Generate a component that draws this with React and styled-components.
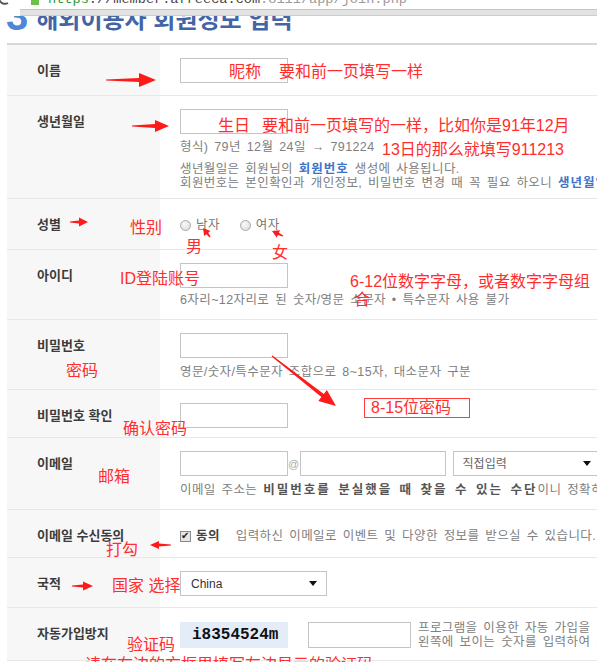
import styled, { createGlobalStyle } from 'styled-components';

const GlobalStyle = createGlobalStyle`
  * {
    box-sizing: border-box;
  }
  html, body {
    margin: 0;
    background: #fff;
  }
  body {
    font-family: "Liberation Sans", "Noto Sans CJK KR", sans-serif;
    overflow: hidden;
  }
`

const Page = styled.div`
  position: relative;
  width: 600px;
  height: 662px;
  overflow: hidden;
`

// browser chrome, cut off at the top of the shot
const Chrome = styled.div`
  position: relative;
  z-index: 2;
  display: flex;
  height: 16px;
  background: #fff;
`
const ReloadBox = styled.div`
  width: 20px;
  height: 16px;
`
const UrlBar = styled.div`
  flex: 1;
  display: flex;
  flex-direction: column;
  margin-right: 3px;
`
const UrlField = styled.div`
  display: flex;
  align-items: flex-start;
  height: 10px;
  padding-left: 11px;
  overflow: hidden;
  border-bottom: 1px solid #c6c6c6;
`
const Lock = styled.span`
  width: 8px;
  height: 5px;
  background: #6fbf4a;
  flex-shrink: 0;
`
const UrlText = styled.span`
  margin: -7px 0 0 9px;
  font-family: "Liberation Mono", monospace;
  font-size: 13.6px;
  line-height: 14px;
  white-space: nowrap;
  color: #444;
`
const Scheme = styled.span`
  color: #2e9b2e;
`
const Faint = styled.span`
  color: #9a9a9a;
`
const Band = styled.div`
  height: 6px;
  background: #e2e2e2;
  border-bottom: 1px solid #cdcdcd;
`

const Title = styled.div`
  display: flex;
  align-items: flex-end;
  height: 27px;
  padding: 0 0 11px 6px;
  overflow: hidden;
`
const StepNo = styled.span`
  font-size: 40px;
  line-height: 40px;
  font-weight: bold;
  color: #4f86d8;
  margin-bottom: -4px;
`
const TitleText = styled.span`
  margin-left: 8px;
  font-size: 24px;
  line-height: 24px;
  font-weight: bold;
  color: #4265a6;
  white-space: nowrap;
`

const Table = styled.div`
  width: 590px;
  margin-left: 7px;
  border-top: 2px solid #d8d8d8;
`
const Row = styled.div`
  display: grid;
  grid-template-columns: 153px 1fr;
  height: ${p => p.$h}px;
  border-bottom: 1px solid #e8e8e8;
`
const Label = styled.div`
  padding: 19px 0 0 30px;
  background: #f7f7f7;
  font-size: 13px;
  line-height: 14px;
  font-weight: bold;
  color: #3c3c3c;
  white-space: nowrap;
`
const Cell = styled.div`
  padding: 13px 0 0 20px;
  overflow: hidden;
  white-space: nowrap;
  font-size: 12.5px;
  line-height: 14px;
  letter-spacing: 0.4px;
  word-spacing: 2px;
  color: #808080;
`
const Line = styled.div`
  display: flex;
  align-items: center;
  margin-top: ${p => p.$mt || 0}px;
`
const Input = styled.input`
  display: block;
  width: ${p => p.$w || 108}px;
  height: ${p => p.$hh || 25}px;
  margin: 0 0 0 ${p => p.$ml || 0}px;
  border: 1px solid #c4c4c4;
  background: #fff;
  flex-shrink: 0;
`
const Help = styled.div`
  margin-top: ${p => p.$mt || 0}px;
  line-height: 14px;
`
const Blue = styled.b`
  color: #3d74c8;
  letter-spacing: 1px;
`
const Dark = styled.b`
  color: #555;
  letter-spacing: 2px;
`
const At = styled.span`
  width: 18px;
  text-align: center;
  color: #aaa;
  font-size: 11px;
`
const Select = styled.div`
  display: flex;
  align-items: center;
  justify-content: space-between;
  flex-shrink: 0;
  width: ${p => p.$w}px;
  height: 25px;
  margin-left: ${p => p.$ml || 0}px;
  padding: 0 ${p => p.$pr}px 0 ${p => p.$pl}px;
  border: 1px solid #c4c4c4;
  color: ${p => p.$c};
  font-size: 12px;
  letter-spacing: 0;
`
const Caret = styled.span`
  width: 0;
  height: 0;
  border-left: 4px solid transparent;
  border-right: 4px solid transparent;
  border-top: 5px solid #111;
`
const Radio = styled.span`
  width: 11px;
  height: 11px;
  border-radius: 50%;
  border: 1px solid #a9a9a9;
  background: radial-gradient(circle at 40% 35%, #fafafa, #d6d6d6);
  margin-left: ${p => p.$ml || 0}px;
  flex-shrink: 0;
`
const RadioText = styled.span`
  margin-left: 5px;
  color: #777;
`
const Check = styled.span`
  display: flex;
  align-items: center;
  justify-content: center;
  width: 11px;
  height: 11px;
  border: 1px solid #8a8a8a;
  background: #e6e6e6;
  color: #222;
  font-size: 10px;
  line-height: 1;
`
const Agree = styled.b`
  margin: 0 16px 0 5px;
  color: #444;
`
const Captcha = styled.div`
  display: flex;
  align-items: center;
  width: 108px;
  height: 26px;
  padding-left: 12px;
  background: #e4ecf8;
  font-family: "Liberation Mono", monospace;
  font-size: 16px;
  font-weight: bold;
  letter-spacing: 0;
  color: #111;
  flex-shrink: 0;
`
const CaptchaNote = styled.div`
  margin-left: 7px;
  line-height: 14px;
`

// red hand-drawn notes layered over the form
const Notes = styled.div`
  position: absolute;
  inset: 0;
  z-index: 3;
  pointer-events: none;
  font-family: "Liberation Sans", "Noto Sans CJK SC", sans-serif;
  color: #ff2d2d;
`
const Note = styled.span`
  position: absolute;
  left: ${p => p.$x}px;
  top: ${p => p.$y}px;
  font-size: 16px;
  line-height: 18px;
  white-space: nowrap;
`
const BoxNote = styled(Note)`
  width: 106px;
  height: 20px;
  padding-left: 6px;
  border: 1.5px solid #ff3b3b;
  line-height: 17px;
`

const arrow = (x1, y1, x2, y2, head, hw, tw) => {
  const len = Math.hypot(x2 - x1, y2 - y1);
  const ux = (x2 - x1) / len;
  const uy = (y2 - y1) / len;
  const nx = -uy;
  const ny = ux;
  const bx = x2 - ux * head;
  const by = y2 - uy * head;
  const pts = [
    [x1 + nx * 0.6, y1 + ny * 0.6],
    [bx + nx * tw, by + ny * tw],
    [bx + nx * hw, by + ny * hw],
    [x2, y2],
    [bx - nx * hw, by - ny * hw],
    [bx - nx * tw, by - ny * tw],
    [x1 - nx * 0.6, y1 - ny * 0.6],
  ];
  return pts.map(p => p[0].toFixed(1) + ',' + p[1].toFixed(1)).join(' ');
};

const arrows = [
  [106, 80, 156, 80, 17, 7, 2],
  [132, 126, 169, 126, 14, 6, 2],
  [70, 222, 88, 222, 9, 4.5, 1.5],
  [210, 237, 203, 228, 7, 4, 1.2],
  [283, 236, 272, 231, 7, 4, 1.2],
  [272, 356, 336, 406, 17, 7, 2],
  [171, 545, 150, 545, 9, 4, 1.5],
  [72, 586, 93, 586, 10, 4.5, 1.5],
];

const App = () => {
  return (
    <Page>
      <GlobalStyle />
      <Chrome>
        <ReloadBox>
          <svg width="20" height="16" viewBox="0 0 20 16">
            <path d="M-1 -2 A6 6 0 0 0 8 3" fill="none" stroke="#555" strokeWidth="2" />
          </svg>
        </ReloadBox>
        <UrlBar>
          <UrlField>
            <Lock />
            <UrlText>
              <Scheme>https</Scheme>://member.afreeca.com<Faint>:8111/app/join.php</Faint>
            </UrlText>
          </UrlField>
          <Band />
        </UrlBar>
      </Chrome>

      <Title>
        <StepNo>3</StepNo>
        <TitleText>해외이용자 회원정보 입력</TitleText>
      </Title>

      <Table>
        <Row $h={51}>
          <Label>이름</Label>
          <Cell><Input /></Cell>
        </Row>
        <Row $h={103}>
          <Label>생년월일</Label>
          <Cell>
            <Input />
            <Help $mt={6}>형식) 79년 12월 24일 → 791224</Help>
            <Help $mt={8}>생년월일은 회원님의 <Blue>회원번호</Blue> 생성에 사용됩니다.</Help>
            <Help>회원번호는 본인확인과 개인정보, 비밀번호 변경 때 꼭 필요 하오니 <Blue>생년월일을 정확히</Blue></Help>
          </Cell>
        </Row>
        <Row $h={51}>
          <Label>성별</Label>
          <Cell>
            <Line $mt={6}>
              <Radio />
              <RadioText>남자</RadioText>
              <Radio $ml={20} />
              <RadioText>여자</RadioText>
            </Line>
          </Cell>
        </Row>
        <Row $h={70}>
          <Label>아이디</Label>
          <Cell>
            <Input />
            <Help $mt={5}>6자리~12자리로 된 숫자/영문 소문자 • 특수문자 사용 불가</Help>
          </Cell>
        </Row>
        <Row $h={70}>
          <Label>비밀번호</Label>
          <Cell>
            <Input />
            <Help $mt={7}>영문/숫자/특수문자 조합으로 8~15자, 대소문자 구분</Help>
          </Cell>
        </Row>
        <Row $h={48}>
          <Label>비밀번호 확인</Label>
          <Cell><Input /></Cell>
        </Row>
        <Row $h={72}>
          <Label>이메일</Label>
          <Cell>
            <Line>
              <Input />
              <At>@</At>
              <Input $w={146} />
              <Select $w={145} $ml={7} $pl={9} $pr={6} $c="#666">
                직접입력
                <Caret />
              </Select>
            </Line>
            <Help $mt={7}>
              이메일 주소는 <Dark>비밀번호를 분실했을 때 찾을 수 있는 수단</Dark>이니 정확히 입력해 주세요.
            </Help>
          </Cell>
        </Row>
        <Row $h={48}>
          <Label>이메일 수신동의</Label>
          <Cell>
            <Line $mt={6}>
              <Check>✔</Check>
              <Agree>동의</Agree>
              입력하신 이메일로 이벤트 및 다양한 정보를 받으실 수 있습니다.
            </Line>
          </Cell>
        </Row>
        <Row $h={50}>
          <Label>국적</Label>
          <Cell>
            <Select $w={147} $pl={10} $pr={9} $c="#333">
              China
              <Caret />
            </Select>
          </Cell>
        </Row>
        <Row $h={53}>
          <Label>자동가입방지</Label>
          <Cell>
            <Line>
              <Captcha>i8354524m</Captcha>
              <Input $w={103} $hh={26} $ml={20} />
              <CaptchaNote>
                프로그램을 이용한 자동 가입을 방지하기 위해<br />
                왼쪽에 보이는 숫자를 입력하여 주세요.
              </CaptchaNote>
            </Line>
          </Cell>
        </Row>
      </Table>

      <Notes>
        <svg width="600" height="662" viewBox="0 0 600 662">
          {arrows.map((a, i) => (
            <polygon key={i} points={arrow(...a)} fill="#ff1a1a" />
          ))}
        </svg>
        <Note $x={229} $y={63}>昵称</Note>
        <Note $x={279} $y={63}>要和前一页填写一样</Note>
        <Note $x={218} $y={117}>生日</Note>
        <Note $x={262} $y={117}>要和前一页填写的一样，比如你是91年12月</Note>
        <Note $x={382} $y={141}>13日的那么就填写911213</Note>
        <Note $x={130} $y={219}>性别</Note>
        <Note $x={186} $y={238}>男</Note>
        <Note $x={272} $y={244}>女</Note>
        <Note $x={120} $y={270}>ID登陆账号</Note>
        <Note $x={350} $y={273}>6-12位数字字母，或者数字字母组</Note>
        <Note $x={354} $y={291}>合</Note>
        <Note $x={66} $y={362}>密码</Note>
        <BoxNote $x={364} $y={398}>8-15位密码</BoxNote>
        <Note $x={123} $y={420}>确认密码</Note>
        <Note $x={98} $y={468}>邮箱</Note>
        <Note $x={106} $y={541}>打勾</Note>
        <Note $x={112} $y={577}>国家 选择</Note>
        <Note $x={127} $y={636}>验证码</Note>
        <Note $x={85} $y={656}>请在右边的方框里填写左边显示的验证码</Note>
      </Notes>
    </Page>
  );
}

export default App;
